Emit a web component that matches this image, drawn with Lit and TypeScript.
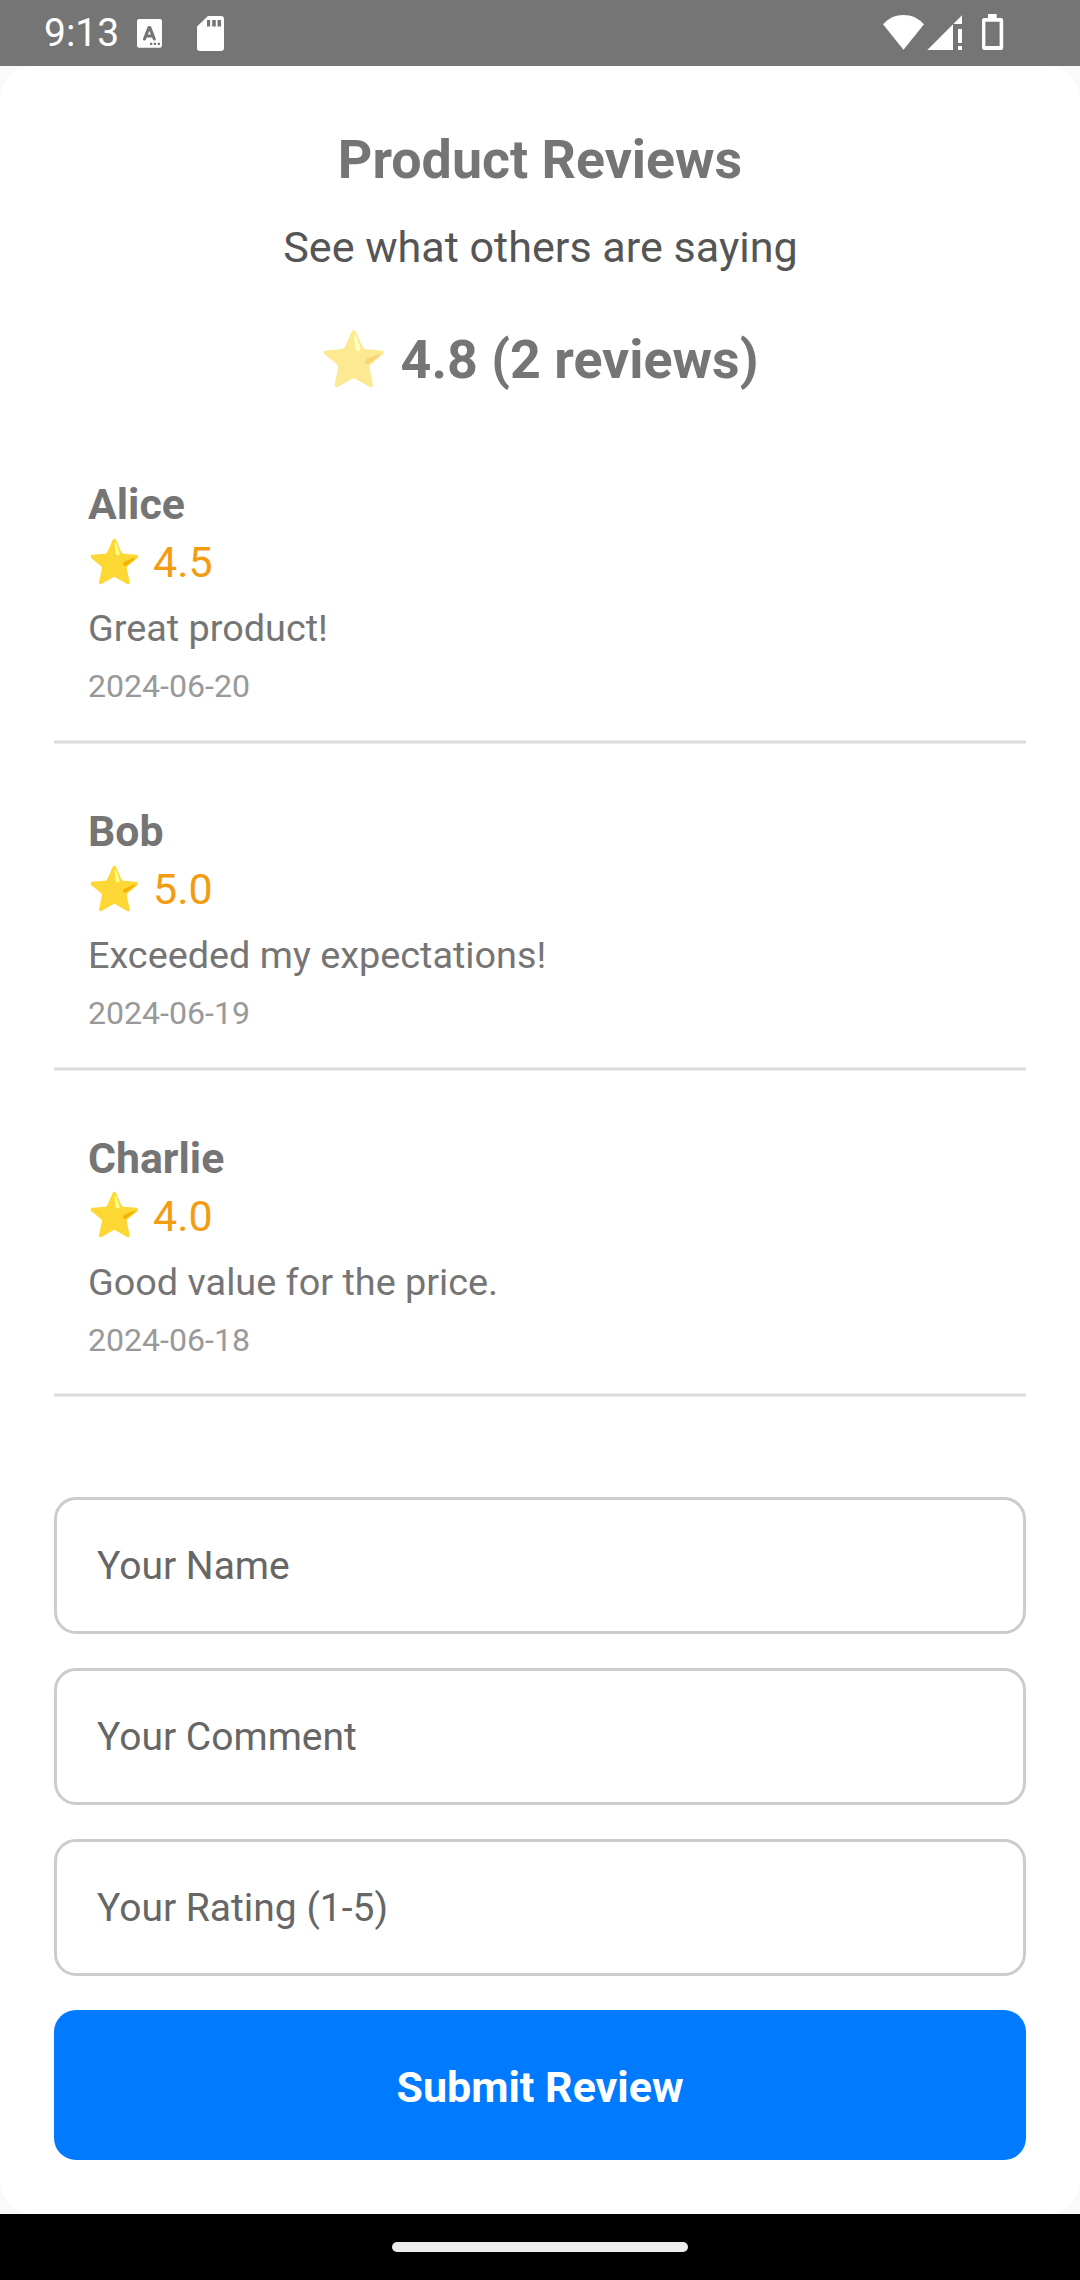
import { LitElement, html, css } from "lit";
import { customElement, property, state } from "lit/decorators.js";

interface Review {
  name: string;
  rating: string;
  comment: string;
  date: string;
}

@customElement("star-icon")
class StarIcon extends LitElement {
  static styles = css`
    :host { display: block; flex: none; }
    .star { display: block; width: 100%; height: 100%; }
  `;
  render() {
    return html`<svg class="star" viewBox="0 0 128 128" aria-hidden="true">
      <path fill="#fdd835" d="M68.05 7.23l13.46 30.7a7.047 7.047 0 0 0 5.82 4.19l32.79 2.94c3.71.54 5.19 5.09 2.5 7.71l-24.7 20.75c-2 1.68-2.91 4.32-2.36 6.87l7.18 33.61c.63 3.69-3.24 6.51-6.56 4.76L67.56 102a7.033 7.033 0 0 0-7.12 0l-28.62 16.75c-3.31 1.74-7.19-1.07-6.56-4.76l7.18-33.61c.54-2.55-.36-5.19-2.36-6.87L5.37 52.78c-2.68-2.61-1.2-7.17 2.5-7.71l32.79-2.94a7.047 7.047 0 0 0 5.82-4.19l13.46-30.7c1.67-3.36 6.45-3.36 8.11-.01z"/>
      <path fill="#ffff8d" d="M67.07 39.77l-2.28-22.62c-.09-1.26-.35-3.42 1.67-3.42 1.6 0 2.47 3.33 2.47 3.33l6.84 18.16c2.58 6.91 1.52 9.28-.97 10.68-2.86 1.6-7.08.35-7.73-6.13z"/>
      <path fill="#f4b400" d="M95.28 71.51L114.9 56.2c.97-.81 2.72-2.1 1.32-3.57-1.11-1.16-4.11.51-4.11.51l-17.17 6.71c-5.12 1.77-8.52 4.39-8.82 7.69-.39 4.4 3.56 7.79 9.16 3.97z"/>
    </svg>`;
  }
}

@customElement("status-bar")
class StatusBar extends LitElement {
  static styles = css`
    :host {
      display: flex;
      align-items: flex-start;
      height: 66px;
      box-sizing: border-box;
      padding: 0 75px 0 44px;
      background: #757575;
      color: #fff;
    }
    .time { font-size: 39px; line-height: 66px; width: 92px; white-space: nowrap; }
    .icon { display: block; height: 66px; flex: none; }
    .keyboard { width: 28px; }
    .card { width: 32px; margin-left: 30px; }
    .spacer { flex: 1; }
    .wifi { width: 44px; }
    .signal { width: 40px; }
    .battery { width: 24px; margin-left: 14px; }
  `;
  render() {
    return html`
      <span class="time">9:13</span>
      <svg class="icon keyboard" viewBox="136 0 28 66">
        <rect x="137" y="19" width="25" height="28.8" rx="2.2" fill="#fff"/>
        <path d="M144.5 39L149 27.6h.8L154.3 39M146 36h7" fill="none" stroke="#757575" stroke-width="3.1" stroke-linecap="round" stroke-linejoin="round"/>
        <path d="M150 42.8h2.2v2.2H150zM153.8 42.8h2.2v2.2h-2.2zM157.7 42.8h2.2v2.2h-2.2z" fill="#757575"/>
      </svg>
      <svg class="icon card" viewBox="194 0 32 66">
        <path fill="#fff" fill-rule="evenodd" d="M208 16h13a3 3 0 0 1 3 3v29a3 3 0 0 1-3 3h-21a3 3 0 0 1-3-3V26.6zM207 20v6.6h3.2V20zM212.2 20v6.6h3.6V20zM217.5 20v6.6h3.6V20z"/>
      </svg>
      <span class="spacer"></span>
      <svg class="icon wifi" viewBox="883 0 44 66">
        <path fill="#fff" d="M903.5 49.7L883 24.3C888.6 18.2 895.5 15 903.5 15S918.4 18.2 924 24.3z"/>
      </svg>
      <svg class="icon signal" viewBox="927 0 40 66">
        <path fill="#fff" d="M927.3 50L962 15.3V24h-9v26zM958 29h4v14h-4zM958 46h4v4h-4z"/>
      </svg>
      <svg class="icon battery" viewBox="981 0 24 66">
        <path fill="#fff" fill-rule="evenodd" d="M988 14h8.7v4h4.3a2.2 2.2 0 0 1 2.2 2.2v27.6a2.2 2.2 0 0 1-2.2 2.2h-16.8a2.2 2.2 0 0 1-2.2-2.2V20.2a2.2 2.2 0 0 1 2.2-2.2h3.8zM985.4 21.7V46h14.2V21.7z"/>
      </svg>
    `;
  }
}

@customElement("review-item")
class ReviewItem extends LitElement {
  @property({ attribute: false }) review!: Review;
  static styles = css`
    :host {
      display: flex;
      flex-direction: column;
      box-sizing: border-box;
      height: 326.67px;
      padding-top: 61.1px;
      color: #757575;
    }
    .body { flex: 1; padding: 0 34px; }
    .name { font-size: 42.8px; line-height: 52px; font-weight: 700; }
    .rating { display: flex; margin-top: 6px; font-size: 43px; line-height: 52px; color: #f39c12; }
    .icon { width: 50.7px; height: 50.7px; margin: 0.7px 13px 0 1.3px; }
    .comment { margin-top: 17px; font-size: 37.8px; line-height: 46px; }
    .date { margin-top: 15px; font-size: 32.1px; line-height: 40px; color: #999; }
    .divider {
      flex: none;
      height: 2px;
      background: #dcdcdc;
      border: solid #ededed;
      border-width: 1px 0;
    }
  `;
  render() {
    const r = this.review;
    return html`
      <div class="body">
        <div class="name">${r.name}</div>
        <div class="rating"><star-icon class="icon"></star-icon><span>${r.rating}</span></div>
        <div class="comment">${r.comment}</div>
        <div class="date">${r.date}</div>
      </div>
      <div class="divider"></div>
    `;
  }
}

@customElement("app-root")
class AppRoot extends LitElement {
  @state() private reviews: Review[] = [
    { name: "Alice", rating: "4.5", comment: "Great product!", date: "2024-06-20" },
    { name: "Bob", rating: "5.0", comment: "Exceeded my expectations!", date: "2024-06-19" },
    { name: "Charlie", rating: "4.0", comment: "Good value for the price.", date: "2024-06-18" },
  ];
  static styles = css`
    :host {
      display: flex;
      flex-direction: column;
      width: 1080px;
      height: 2280px;
      overflow: hidden;
      background: #fafafa;
      font-family: Roboto, "Liberation Sans", sans-serif;
    }
    .page {
      flex: 1;
      box-sizing: border-box;
      padding: 62px 54px 0;
      border-radius: 33px;
      background: #fff;
      color: #757575;
    }
    .header { display: flex; flex-direction: column; align-items: center; }
    .title { margin: 0; font-size: 53.75px; line-height: 64px; font-weight: 700; }
    .subtitle { margin-top: 30px; padding-left: 1px; font-size: 43.1px; line-height: 52px; color: #555; }
    .summary { display: flex; margin-top: 54px; font-size: 53.75px; line-height: 64px; font-weight: 700; }
    .summary-star { width: 63.6px; height: 63.6px; margin-right: 15.5px; opacity: 0.54; }
    .list { margin-top: 25.33px; }
    .form { display: flex; flex-direction: column; gap: 34px; margin-top: 99.66px; }
    .field {
      box-sizing: border-box;
      width: 100%;
      height: 137px;
      margin: 0;
      padding: 2px 40px 0;
      border: 3px solid #ccc;
      border-radius: 22px;
      background: transparent;
      font: 400 39px Roboto, "Liberation Sans", sans-serif;
      outline: none;
    }
    .field::placeholder { color: #666; opacity: 1; }
    .submit {
      height: 150px;
      padding: 5px 0 0;
      border: 0;
      border-radius: 22px;
      background: #007bff;
      color: #fff;
      font: 700 43px Roboto, "Liberation Sans", sans-serif;
    }
    .nav { display: flex; justify-content: center; align-items: flex-start; height: 66px; box-sizing: border-box; padding-top: 28px; background: #000; }
    .handle { width: 296px; height: 10px; border-radius: 5px; background: #ececec; }
  `;
  render() {
    return html`
      <status-bar></status-bar>
      <main class="page">
        <header class="header">
          <h1 class="title">Product Reviews</h1>
          <div class="subtitle">See what others are saying</div>
          <div class="summary"><star-icon class="summary-star"></star-icon><span>4.8 (2 reviews)</span></div>
        </header>
        <section class="list">
          ${this.reviews.map((r) => html`<review-item .review=${r}></review-item>`)}
        </section>
        <form class="form">
          <input class="field" placeholder="Your Name" />
          <input class="field" placeholder="Your Comment" />
          <input class="field" placeholder="Your Rating (1-5)" />
          <button class="submit" type="button">Submit Review</button>
        </form>
      </main>
      <div class="nav"><div class="handle"></div></div>
    `;
  }
}
